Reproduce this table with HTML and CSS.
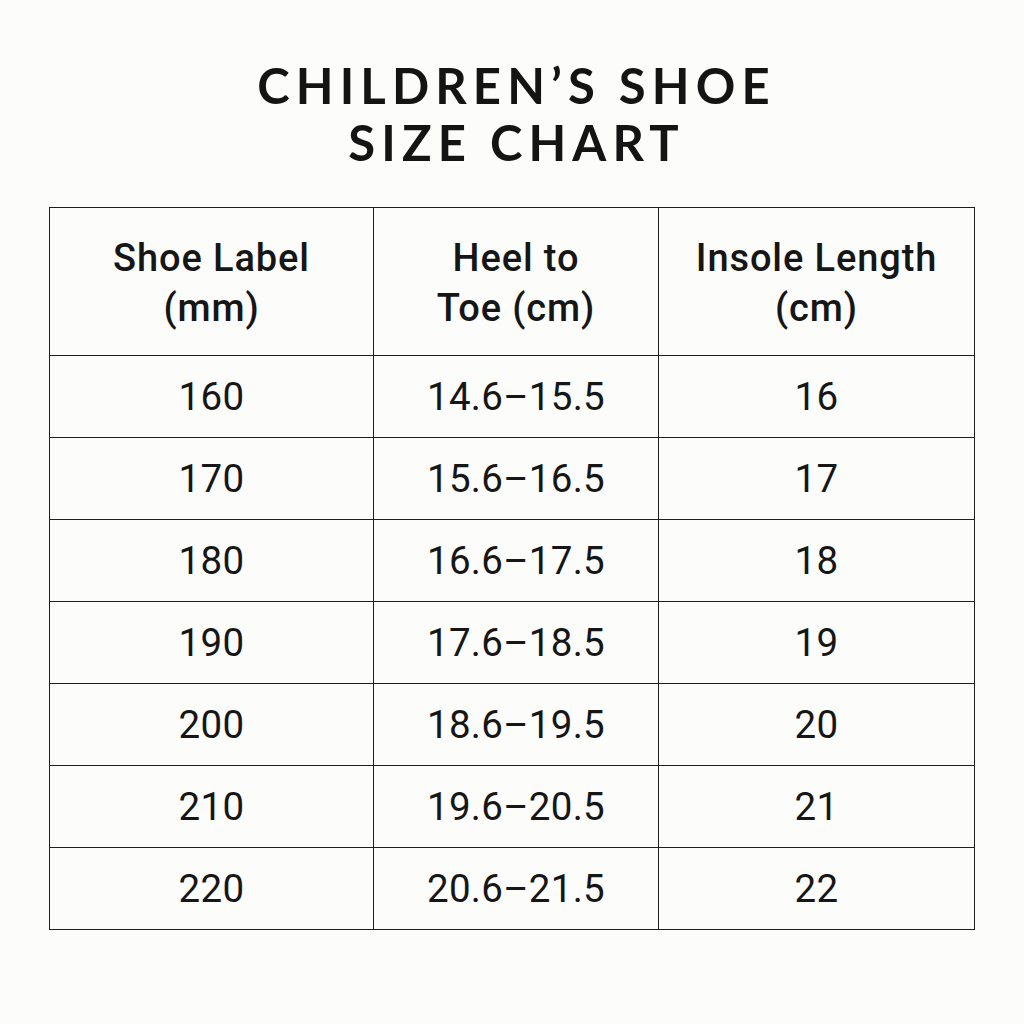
FILE: index.html
```html
<!DOCTYPE html>
<html>
<head>
<meta charset="utf-8">
<link rel="stylesheet" href="styles.css">
</head>
<body>
<main class="page">
  <h1 class="title">CHILDREN’S SHOE<br>SIZE CHART</h1>
  <table class="chart">
    <colgroup>
      <col class="c1"><col class="c2"><col class="c3">
    </colgroup>
    <thead>
      <tr><th>Shoe Label<br>(mm)</th><th>Heel to<br>Toe (cm)</th><th>Insole Length<br>(cm)</th></tr>
    </thead>
    <tbody>
      <tr><td>160</td><td>14.6–15.5</td><td>16</td></tr>
      <tr><td>170</td><td>15.6–16.5</td><td>17</td></tr>
      <tr><td>180</td><td>16.6–17.5</td><td>18</td></tr>
      <tr><td>190</td><td>17.6–18.5</td><td>19</td></tr>
      <tr><td>200</td><td>18.6–19.5</td><td>20</td></tr>
      <tr><td>210</td><td>19.6–20.5</td><td>21</td></tr>
      <tr><td>220</td><td>20.6–21.5</td><td>22</td></tr>
    </tbody>
  </table>
</main>
</body>
</html>
```
FILE: styles.css
```css
html, body {
  margin: 0;
  padding: 0;
  background: #fcfcfb;
}
.page {
  width: 1024px;
  height: 1024px;
  padding-top: 57px;
  box-sizing: border-box;
  display: flex;
  flex-direction: column;
  align-items: center;
  font-family: Roboto, "Liberation Sans", sans-serif;
  color: #161616;
}
.title {
  margin: 0 0 36px 0;
  padding-left: 9px;
  font-family: Lato, "Liberation Sans", sans-serif;
  font-weight: 700;
  font-size: 49px;
  line-height: 57px;
  letter-spacing: 6.1px;
  text-align: center;
  color: #141414;
}
.chart {
  width: 925px;
  border-collapse: collapse;
  table-layout: fixed;
}
.c1 { width: 324px; }
.c2 { width: 285px; }
.c3 { width: 316px; }
.chart th, .chart td {
  border: 1.5px solid #1e1e1e;
  text-align: center;
  padding: 0;
}
.chart th {
  height: 145px;
  font-weight: 500;
  font-size: 38px;
  line-height: 50px;
  letter-spacing: 0.9px;
  padding-top: 2px;
}
.chart td {
  height: 81px;
  font-weight: 400;
  font-size: 38.5px;
  letter-spacing: 0.3px;
}
```
